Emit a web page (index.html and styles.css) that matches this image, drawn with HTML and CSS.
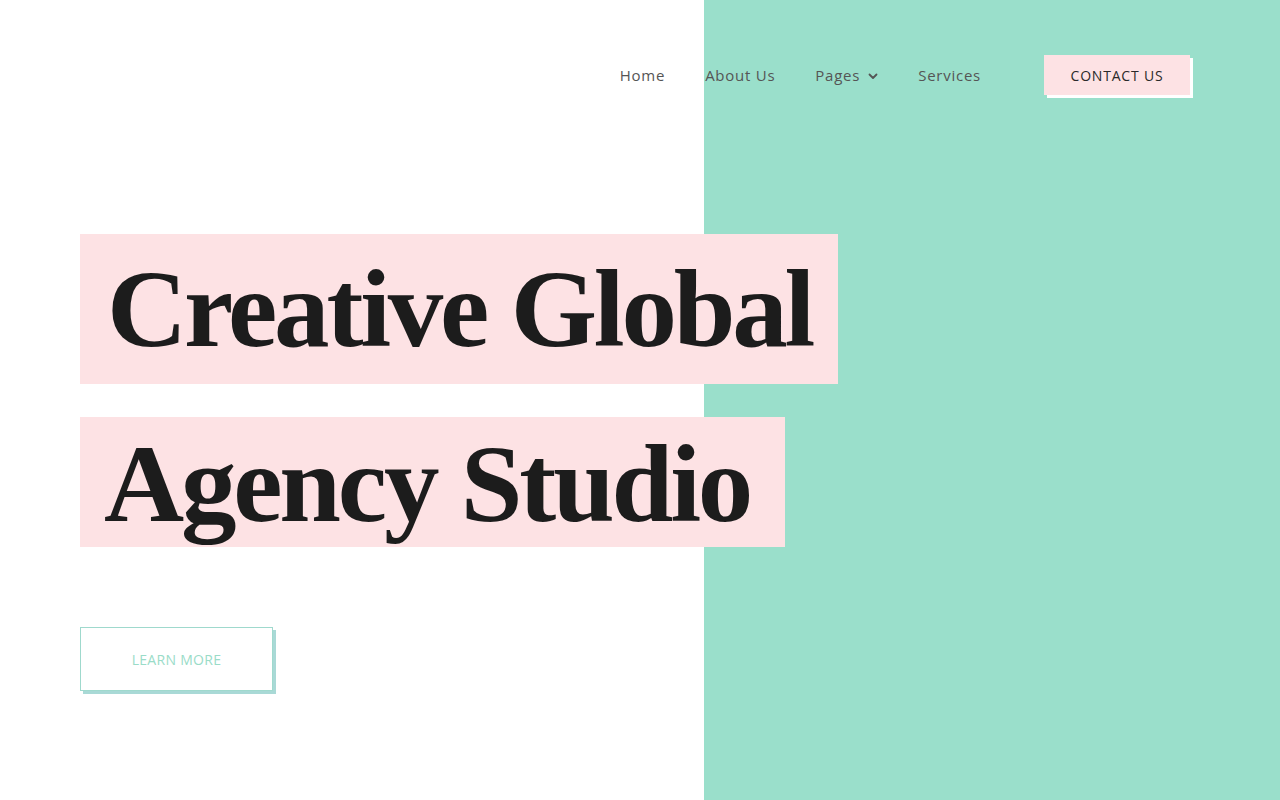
FILE: index.html
```html
<!DOCTYPE html>
<html lang="en">
<head>
<meta charset="utf-8">
<title>Creative Global Agency Studio</title>
<link rel="stylesheet" href="styles.css">
</head>
<body>
<div class="page">
  <header class="header">
    <nav class="nav">
      <a class="nav-link" href="#">Home</a>
      <a class="nav-link" href="#">About Us</a>
      <a class="nav-link" href="#">Pages
        <svg class="chev" width="10" height="7" viewBox="0 0 10 7"><path d="M1.5 1.5 L5 5 L8.5 1.5" fill="none" stroke="#555" stroke-width="1.8" stroke-linecap="round" stroke-linejoin="round"/></svg>
      </a>
      <a class="nav-link" href="#">Services</a>
    </nav>
    <a class="contact-btn" href="#">CONTACT US</a>
  </header>
  <main class="hero">
    <h1 class="title">
      <span class="line line-1">Creative Global</span>
      <span class="line line-2">Agency Studio</span>
    </h1>
    <a class="learn-btn" href="#">LEARN MORE</a>
  </main>
</div>
</body>
</html>
```
FILE: styles.css
```css
html, body {
  margin: 0;
  padding: 0;
}
body {
  background: linear-gradient(to right, #ffffff 0, #ffffff 704px, #9adfcb 704px, #9adfcb 100%);
  min-height: 800px;
  font-family: "Open Sans", "Liberation Sans", sans-serif;
}
.page {
  width: 1280px;
  height: 800px;
  overflow: hidden;
}
.header {
  display: flex;
  justify-content: flex-end;
  align-items: center;
  padding: 55px 90px 0 0;
  height: 40px;
}
.nav {
  display: flex;
  align-items: center;
  gap: 40px;
  margin-right: 63px;
}
.nav-link {
  color: #555555;
  text-decoration: none;
  font-size: 15px;
  letter-spacing: 0.75px;
  display: flex;
  align-items: center;
  gap: 8px;
}
.chev {
  margin-top: 2px;
}
.contact-btn {
  display: flex;
  align-items: center;
  justify-content: center;
  width: 146px;
  height: 40px;
  background: #fde2e4;
  color: #2a2a2a;
  font-size: 14px;
  letter-spacing: 0.8px;
  text-decoration: none;
  box-shadow: 3px 3px 0 #ffffff;
}
.hero {
  padding: 139px 0 0 80px;
}
.title {
  margin: 0;
  display: flex;
  flex-direction: column;
  align-items: flex-start;
  gap: 33px;
  font-family: "Liberation Serif", "DejaVu Serif", serif;
  font-weight: 700;
  color: #1c1c1c;
}
.line {
  display: block;
  background: #fde2e4;
  font-size: 111px;
  letter-spacing: -3.2px;
  white-space: nowrap;
}
.line-1 {
  height: 150px;
  line-height: 150px;
  padding: 0 26px 0 27px;
}
.line-2 {
  height: 130px;
  line-height: 134px;
  padding: 0 35px 0 24px;
}
.learn-btn {
  margin-top: 80px;
  display: flex;
  align-items: center;
  justify-content: center;
  width: 191px;
  height: 62px;
  border: 1px solid #9fd9cd;
  background: #ffffff;
  color: #9adcc8;
  font-size: 14px;
  letter-spacing: 0.3px;
  text-decoration: none;
  box-shadow: 3px 3px 0 #a9d9d6;
}
```
